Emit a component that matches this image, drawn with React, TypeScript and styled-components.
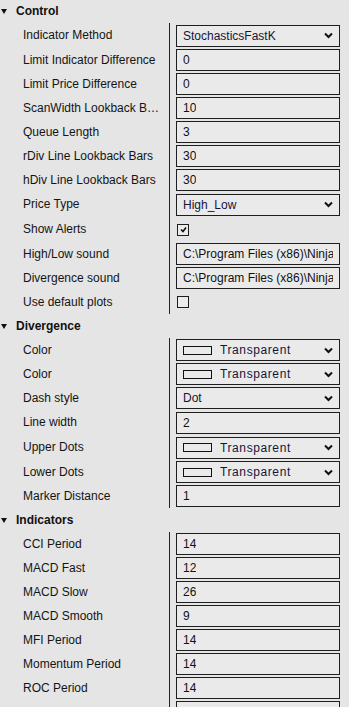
import React from "react";
import styled, { createGlobalStyle } from "styled-components";

type Field =
  | { kind: "text"; label: string; value: string; h?: number }
  | { kind: "select"; label: string; value: string; h?: number }
  | { kind: "color"; label: string; value: string; h?: number }
  | { kind: "check"; label: string; checked: boolean; h?: number };

const sections: { title: string; fields: Field[] }[] = [
  {
    title: "Control",
    fields: [
      { kind: "select", label: "Indicator Method", value: "StochasticsFastK", h: 25 },
      { kind: "text", label: "Limit Indicator Difference", value: "0" },
      { kind: "text", label: "Limit Price Difference", value: "0" },
      { kind: "text", label: "ScanWidth Lookback Bars", value: "10" },
      { kind: "text", label: "Queue Length", value: "3" },
      { kind: "text", label: "rDiv Line Lookback Bars", value: "30" },
      { kind: "text", label: "hDiv Line Lookback Bars", value: "30" },
      { kind: "select", label: "Price Type", value: "High_Low", h: 25 },
      { kind: "check", label: "Show Alerts", checked: true, h: 25 },
      { kind: "text", label: "High/Low sound", value: "C:\\Program Files (x86)\\NinjaTrader 8\\sounds\\Alert2.wav" },
      { kind: "text", label: "Divergence sound", value: "C:\\Program Files (x86)\\NinjaTrader 8\\sounds\\Alert4.wav" },
      { kind: "check", label: "Use default plots", checked: false },
    ],
  },
  {
    title: "Divergence",
    fields: [
      { kind: "color", label: "Color", value: "Transparent" },
      { kind: "color", label: "Color", value: "Transparent" },
      { kind: "select", label: "Dash style", value: "Dot" },
      { kind: "text", label: "Line width", value: "2", h: 25 },
      { kind: "color", label: "Upper Dots", value: "Transparent", h: 25 },
      { kind: "color", label: "Lower Dots", value: "Transparent" },
      { kind: "text", label: "Marker Distance", value: "1" },
    ],
  },
  {
    title: "Indicators",
    fields: [
      { kind: "text", label: "CCI Period", value: "14" },
      { kind: "text", label: "MACD Fast", value: "12" },
      { kind: "text", label: "MACD Slow", value: "26" },
      { kind: "text", label: "MACD Smooth", value: "9" },
      { kind: "text", label: "MFI Period", value: "14" },
      { kind: "text", label: "Momentum Period", value: "14" },
      { kind: "text", label: "ROC Period", value: "14" },
      { kind: "text", label: "RSI Period", value: "14" },
    ],
  },
];

function Chevron() {
  return (
    <ChevronSvg width="9" height="7" viewBox="0 0 9 7">
      <polyline points="1,1.5 4.5,5 8,1.5" fill="none" stroke="#111" strokeWidth="2" />
    </ChevronSvg>
  );
}

function Value({ field }: { field: Field }) {
  if (field.kind === "check") {
    return (
      <CheckBox>
        {field.checked && (
          <svg width="9" height="9" viewBox="0 0 9 9">
            <polyline points="2,4.5 4,6.5 7,2.5" fill="none" stroke="#111" strokeWidth="1.6" />
          </svg>
        )}
      </CheckBox>
    );
  }
  if (field.kind === "select") {
    return (
      <Box>
        <SelectText>{field.value}</SelectText>
        <Chevron />
      </Box>
    );
  }
  if (field.kind === "color") {
    return (
      <Box>
        <Swatch />
        <ColorText>{field.value}</ColorText>
        <Chevron />
      </Box>
    );
  }
  return (
    <Box>
      <InputText>{field.value}</InputText>
    </Box>
  );
}

export default function App() {
  return (
    <>
      <GlobalStyle />
      <Grid>
        {sections.map((s) => (
          <Section key={s.title}>
            <Header>
              <Caret />
              <HeaderTitle>{s.title}</HeaderTitle>
            </Header>
            {s.fields.map((f, i) => (
              <Row key={i} $h={f.h ?? 24}>
                <Label>{f.label}</Label>
                <Cell>
                  <Value field={f} />
                </Cell>
              </Row>
            ))}
          </Section>
        ))}
      </Grid>
    </>
  );
}

const GlobalStyle = createGlobalStyle`
  html, body {
    margin: 0;
    padding: 0;
    overflow: hidden;
    background: #e5e5e5;
  }
  body {
    font-family: "Liberation Sans", Arial, sans-serif;
    font-size: 12px;
    color: #141414;
  }
`;

const Grid = styled.div`
  width: 349px;
  margin-top: -1px;
  display: flex;
  flex-direction: column;
`;

const Section = styled.div`
  display: flex;
  flex-direction: column;
`;

const Header = styled.div`
  height: 24px;
  display: flex;
  align-items: center;
  padding-left: 1px;
`;

const Caret = styled.span`
  width: 0;
  height: 0;
  border-left: 3.5px solid transparent;
  border-right: 3.5px solid transparent;
  border-top: 5px solid #111;
  margin-right: 9px;
`;

const HeaderTitle = styled.span`
  font-weight: bold;
  color: #111;
`;

const Row = styled.div<{ $h: number }>`
  height: ${(p) => p.$h}px;
  display: grid;
  grid-template-columns: 169px 1fr;
`;

const Label = styled.div`
  padding-left: 23px;
  padding-right: 6px;
  min-width: 0;
  overflow: hidden;
  white-space: nowrap;
  text-overflow: ellipsis;
  line-height: 24px;
`;

const Cell = styled.div`
  border-left: 1px solid #222;
  padding: 0 9px 0 6px;
  display: flex;
  align-items: center;
  min-width: 0;
`;

const Box = styled.div`
  box-sizing: border-box;
  width: 164px;
  height: 22px;
  border: 1px solid #1e1e1e;
  background: #eaeaea;
  display: flex;
  align-items: center;
  padding: 0 6px;
  overflow: hidden;
`;

const InputText = styled.span`
  white-space: nowrap;
  overflow: hidden;
  color: #111;
`;

const SelectText = styled.span`
  flex: 1;
  white-space: nowrap;
  color: #15153a;
`;

const ColorText = styled.span`
  flex: 1;
  white-space: nowrap;
  letter-spacing: 0.6px;
  color: #15153a;
`;

const Swatch = styled.span`
  box-sizing: border-box;
  width: 29px;
  height: 9px;
  border: 1px solid #111;
  margin-right: 8px;
  flex-shrink: 0;
`;

const ChevronSvg = styled.svg`
  flex-shrink: 0;
`;

const CheckBox = styled.div`
  box-sizing: border-box;
  width: 12px;
  height: 12px;
  border: 1px solid #1e1e1e;
  background: #ececec;
  display: flex;
  align-items: center;
  justify-content: center;
  margin-left: 1px;
`;
